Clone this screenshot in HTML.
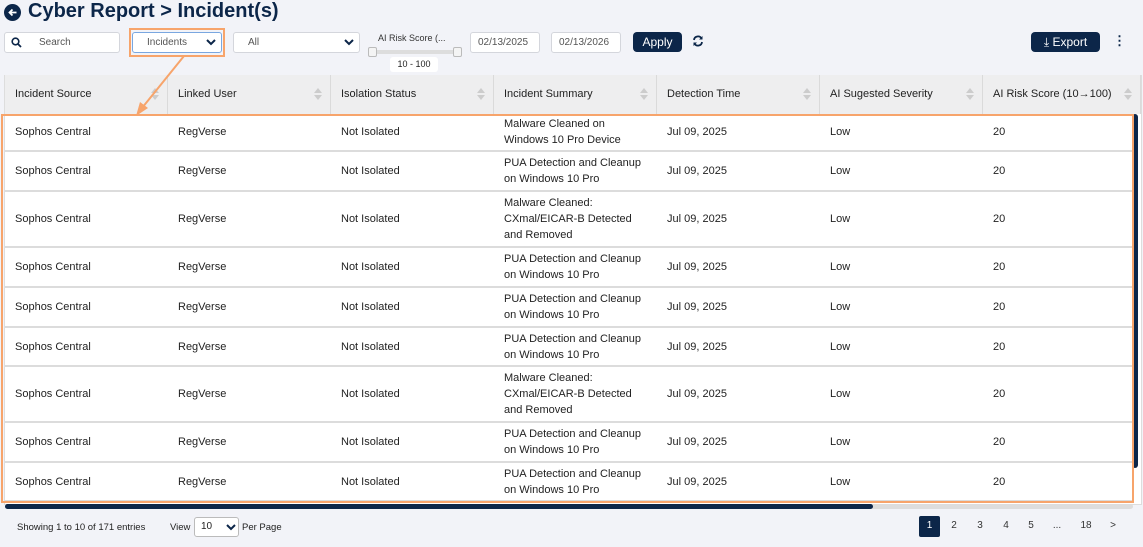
<!DOCTYPE html>
<html><head><meta charset="utf-8"><style>
*{box-sizing:border-box;margin:0;padding:0}
body{width:1143px;height:547px;background:#f2f3f8;font-family:"Liberation Sans",Arial,sans-serif;color:#222;position:relative;overflow:hidden;font-size:11px}
.a{position:absolute}
.inp{position:absolute;background:#fff;border:1px solid #d4d6dc;border-radius:3px;height:21px;top:32px;font-size:10px;color:#555;line-height:19px}
.btn{position:absolute;background:#0c2649;color:#fff;border-radius:4px;height:20px;top:32px;font-size:12px;line-height:20px;text-align:center}
.row{position:absolute;left:5px;width:1128px;background:#fff;border-bottom:2px solid #dcdcdc}
.c{position:absolute;top:50%;transform:translateY(-50%);line-height:16px;font-size:11px;color:#222}
.h{position:absolute;top:75px;height:39px;background:#eeeeef;border-right:1px solid #dadada;font-size:11px;color:#222;line-height:39px;padding-left:10px}
.h:after{content:"";position:absolute;right:8px;top:13px;width:0;height:0;border:4px solid transparent;border-bottom:5px solid #ccc;border-top:0}
.h:before{content:"";position:absolute;right:8px;top:20px;width:0;height:0;border:4px solid transparent;border-top:5px solid #ccc;border-bottom:0}
.pg{position:absolute;top:516px;font-size:10px;color:#333;width:20px;text-align:center;line-height:20px}
</style></head><body>
<div class="a" style="left:4px;top:4px;width:17px;height:17px;border-radius:50%;background:#0c2649"></div>
<svg class="a" style="left:4px;top:4px" width="17" height="17"><path d="M12.5 8.5H5.5M8.5 5.5l-3 3 3 3" stroke="#fff" stroke-width="1.8" fill="none"/></svg>
<div class="a" style="left:28px;top:0px;font-size:20px;font-weight:bold;color:#0c2649">Cyber Report &gt; Incident(s)</div>

<div class="inp" style="left:4px;width:116px;padding-left:34px">Search</div>
<svg class="a" style="left:11px;top:37px" width="11" height="11" viewBox="0 0 11 11"><circle cx="4.5" cy="4.5" r="3.3" fill="none" stroke="#0c2649" stroke-width="1.6"/><path d="M7 7l3 3" stroke="#0c2649" stroke-width="1.8"/></svg>
<div class="a" style="left:129px;top:28px;width:96px;height:29px;border:2px solid #f7a46b"></div>
<div class="inp" style="left:132px;width:90px;padding-left:14px;border-color:#7aa7e0">Incidents</div>
<svg class="a" style="left:206px;top:39px" width="10" height="8"><path d="M1 1l4 4 4-4" stroke="#0c2649" stroke-width="2" fill="none"/></svg>
<div class="inp" style="left:233px;width:127px;padding-left:14px">All</div>
<svg class="a" style="left:344px;top:39px" width="10" height="8"><path d="M1 1l4 4 4-4" stroke="#0c2649" stroke-width="2" fill="none"/></svg>
<div class="a" style="left:378px;top:33px;font-size:9px;color:#333">AI Risk Score (...</div>
<div class="a" style="left:370px;top:50px;width:92px;height:4px;background:#ddd;border-radius:2px"></div>
<div class="a" style="left:368px;top:47px;width:9px;height:10px;background:#f4f4f4;border:1px solid #bbb;border-radius:2px"></div>
<div class="a" style="left:453px;top:47px;width:9px;height:10px;background:#f4f4f4;border:1px solid #bbb;border-radius:2px"></div>
<div class="a" style="left:390px;top:57px;width:48px;height:15px;background:#fff;border-radius:3px;font-size:9px;line-height:15px;text-align:center">10 - 100</div>
<div class="inp" style="left:470px;width:70px;padding-left:7px">02/13/2025</div>
<div class="inp" style="left:551px;width:70px;padding-left:7px">02/13/2026</div>
<div class="btn" style="left:633px;width:49px">Apply</div>
<svg class="a" style="left:692px;top:35px" width="12" height="12" viewBox="0 0 12 12"><path d="M2 5a4 4 0 0 1 7.5-1.5M10 7a4 4 0 0 1-7.5 1.5" stroke="#0c2649" stroke-width="1.8" fill="none"/><path d="M10.5 1v3.5H7zM1.5 11V7.5H5z" fill="#0c2649"/></svg>
<div class="btn" style="left:1031px;width:69px">⤓ Export</div>
<div class="a" style="left:1113px;top:33px;font-size:13px;font-weight:bold;color:#0c2649">⋮</div>

<div class="a" style="left:4px;top:75px;width:1138px;height:430px;background:#fff;border:1px solid #ddd"></div>
<div class="h" style="left:5px;width:163px">Incident Source</div>
<div class="h" style="left:168px;width:163px">Linked User</div>
<div class="h" style="left:331px;width:163px">Isolation Status</div>
<div class="h" style="left:494px;width:163px">Incident Summary</div>
<div class="h" style="left:657px;width:163px">Detection Time</div>
<div class="h" style="left:820px;width:163px">AI Sugested Severity</div>
<div class="h" style="left:983px;width:158px">AI Risk Score (10→100)</div>

<div id="rows"></div>
<script>
var R=[[114,152,"Malware Cleaned on<br>Windows 10 Pro Device"],[152,192,"PUA Detection and Cleanup<br>on Windows 10 Pro"],[192,248,"Malware Cleaned:<br>CXmal/EICAR-B Detected<br>and Removed"],[248,288,"PUA Detection and Cleanup<br>on Windows 10 Pro"],[288,328,"PUA Detection and Cleanup<br>on Windows 10 Pro"],[328,367,"PUA Detection and Cleanup<br>on Windows 10 Pro"],[367,423,"Malware Cleaned:<br>CXmal/EICAR-B Detected<br>and Removed"],[423,463,"PUA Detection and Cleanup<br>on Windows 10 Pro"],[463,502,"PUA Detection and Cleanup<br>on Windows 10 Pro"]];
var h="";R.forEach(function(r){h+='<div class="row" style="top:'+r[0]+'px;height:'+(r[1]-r[0])+'px">'+
'<div class="c" style="left:10px">Sophos Central</div><div class="c" style="left:173px">RegVerse</div><div class="c" style="left:336px">Not Isolated</div><div class="c" style="left:499px">'+r[2]+'</div><div class="c" style="left:662px">Jul 09, 2025</div><div class="c" style="left:825px">Low</div><div class="c" style="left:988px">20</div></div>';});
document.getElementById("rows").innerHTML=h;
</script>
<div class="a" style="left:1132px;top:114px;width:6px;height:354px;background:#0c2649;border-radius:3px"></div>
<div class="a" style="left:1px;top:114px;width:1133px;height:389px;border:2px solid #f7a46b"></div>
<svg class="a" style="left:130px;top:56px" width="60" height="60"><path d="M54 0L12 52" stroke="#f7a46b" stroke-width="2"/><path d="M6 60l4-14 8 6z" fill="#f7a46b"/></svg>
<div class="a" style="left:5px;top:504px;width:1128px;height:5px;background:#ddd;border-radius:3px"></div>
<div class="a" style="left:5px;top:504px;width:868px;height:5px;background:#0c2649;border-radius:3px"></div>

<div class="a" style="left:17px;top:522px;font-size:9.5px;color:#222">Showing 1 to 10 of 171 entries</div>
<div class="a" style="left:170px;top:522px;font-size:9.5px">View</div>
<div class="a" style="left:194px;top:517px;width:45px;height:20px;border:1px solid #bbb;border-radius:3px;background:#fff;font-size:10px;padding-left:6px;line-height:18px">10</div>
<svg class="a" style="left:226px;top:524px" width="10" height="8"><path d="M1 1l4 4 4-4" stroke="#0c2649" stroke-width="2" fill="none"/></svg>
<div class="a" style="left:242px;top:522px;font-size:9.5px">Per Page</div>
<div class="pg" style="left:919px;top:516px;height:21px;background:#0c2649;color:#fff;border-radius:2px;width:21px">1</div>
<div class="pg" style="left:944px">2</div><div class="pg" style="left:970px">3</div><div class="pg" style="left:996px">4</div><div class="pg" style="left:1021px">5</div><div class="pg" style="left:1047px">...</div><div class="pg" style="left:1076px">18</div><div class="pg" style="left:1103px">&gt;</div>
</body></html>
